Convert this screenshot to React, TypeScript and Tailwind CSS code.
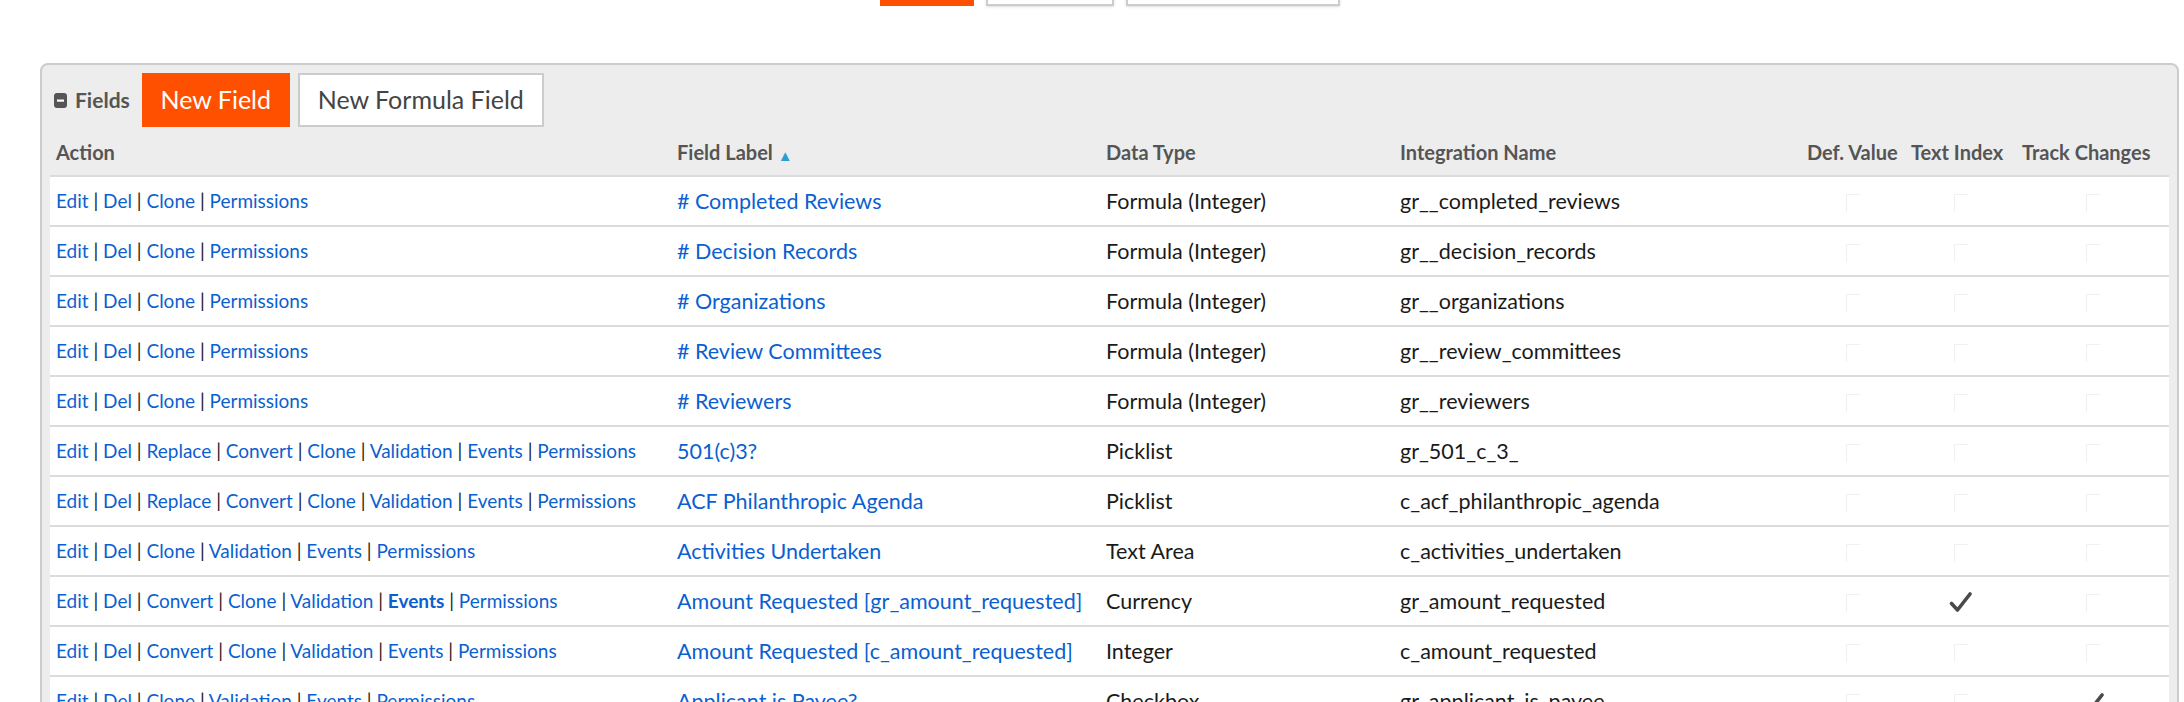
import React from "react";

type FieldRow = {
  actions: string[];
  boldAction?: string;
  label: string;
  dataType: string;
  integrationName: string;
  defValue?: boolean;
  textIndex?: boolean;
  trackChanges?: boolean;
};

const formulaActions = ["Edit", "Del", "Clone", "Permissions"];
const fullActions = ["Edit", "Del", "Replace", "Convert", "Clone", "Validation", "Events", "Permissions"];
const basicActions = ["Edit", "Del", "Clone", "Validation", "Events", "Permissions"];
const convertActions = ["Edit", "Del", "Convert", "Clone", "Validation", "Events", "Permissions"];

const rows: FieldRow[] = [
  { actions: formulaActions, label: "# Completed Reviews", dataType: "Formula (Integer)", integrationName: "gr__completed_reviews" },
  { actions: formulaActions, label: "# Decision Records", dataType: "Formula (Integer)", integrationName: "gr__decision_records" },
  { actions: formulaActions, label: "# Organizations", dataType: "Formula (Integer)", integrationName: "gr__organizations" },
  { actions: formulaActions, label: "# Review Committees", dataType: "Formula (Integer)", integrationName: "gr__review_committees" },
  { actions: formulaActions, label: "# Reviewers", dataType: "Formula (Integer)", integrationName: "gr__reviewers" },
  { actions: fullActions, label: "501(c)3?", dataType: "Picklist", integrationName: "gr_501_c_3_" },
  { actions: fullActions, label: "ACF Philanthropic Agenda", dataType: "Picklist", integrationName: "c_acf_philanthropic_agenda" },
  { actions: basicActions, label: "Activities Undertaken", dataType: "Text Area", integrationName: "c_activities_undertaken" },
  {
    actions: convertActions,
    boldAction: "Events",
    label: "Amount Requested [gr_amount_requested]",
    dataType: "Currency",
    integrationName: "gr_amount_requested",
    textIndex: true,
  },
  { actions: convertActions, label: "Amount Requested [c_amount_requested]", dataType: "Integer", integrationName: "c_amount_requested" },
  { actions: basicActions, label: "Applicant is Payee?", dataType: "Checkbox", integrationName: "gr_applicant_is_payee", trackChanges: true },
];

function Check({ on }: { on?: boolean }) {
  if (on) {
    return (
      <svg width="24" height="22" viewBox="0 0 24 22" className="inline-block align-middle">
        <path d="M2.5 12.5 L8.5 19 L21 3" fill="none" stroke="#4a4a4a" strokeWidth="3.6" strokeLinecap="round" strokeLinejoin="round" />
      </svg>
    );
  }
  // disabled checkbox, barely visible
  return <span className="inline-block w-[14px] h-[18px] border-l border-t border-[#f0f0f0] align-middle" />;
}

function ActionLinks({ actions, bold }: { actions: string[]; bold?: string }) {
  return (
    <span className="text-[19px] text-[#222]">
      {actions.map((a, i) => (
        <span key={a}>
          {i > 0 && " | "}
          <a href="#" className={`text-[#0b5fd0] ${a === bold ? "font-bold" : ""}`}>
            {a}
          </a>
        </span>
      ))}
    </span>
  );
}

export default function App() {
  return (
    <main className="min-h-screen bg-white font-['Lato','Liberation_Sans',sans-serif] overflow-hidden h-[702px]">
      {/* toolbar buttons above, mostly scrolled out of view */}
      <div className="flex gap-3 ml-[880px] mt-[-48px]">
        <button type="button" className="w-[94px] h-[54px] bg-[#ff5000]" />
        <button type="button" className="w-[128px] h-[54px] bg-white border-2 border-[#cccccc] shadow" />
        <button type="button" className="w-[214px] h-[54px] bg-white border-2 border-[#cccccc] shadow" />
      </div>

      <div className="ml-[40px] mr-[5px] mt-[57px] bg-[#ededed] border-2 border-[#cccccc] rounded-lg px-[8px] pt-[6px]">
        <div className="flex items-center h-[58px]">
          <svg width="13" height="15" viewBox="0 0 13 15" className="ml-[4px]">
            <rect x="0" y="0" width="13" height="15" rx="3" fill="#555" />
            <rect x="3" y="6.5" width="7" height="2.2" fill="#fff" />
          </svg>
          <span className="ml-[8px] text-[21px] font-bold text-[#555]">Fields</span>
          <button type="button" className="ml-[12px] h-[54px] w-[148px] bg-[#ff5000] text-white text-[25px]">
            New Field
          </button>
          <button
            type="button"
            className="ml-[8px] h-[54px] w-[246px] bg-white border-2 border-[#cccccc] text-[#444] text-[25px]"
          >
            New Formula Field
          </button>
        </div>

        <table className="w-full table-fixed border-collapse">
          <colgroup>
            <col className="w-[621px]" />
            <col className="w-[429px]" />
            <col className="w-[294px]" />
            <col className="w-[407px]" />
            <col className="w-[104px]" />
            <col className="w-[111px]" />
            <col />
          </colgroup>
          <thead>
            <tr className="h-[47px] text-[20px] font-bold text-[#555] text-left">
              <th className="pl-[6px] font-bold">Action</th>
              <th className="pl-[6px] font-bold">
                Field Label <span className="text-[#2a9fd6] text-[15px] align-middle">▲</span>
              </th>
              <th className="pl-[6px] font-bold">Data Type</th>
              <th className="pl-[6px] font-bold">Integration Name</th>
              <th className="pl-[6px] font-bold whitespace-nowrap">Def. Value</th>
              <th className="pl-[6px] font-bold whitespace-nowrap">Text Index</th>
              <th className="pl-[6px] font-bold whitespace-nowrap">Track Changes</th>
            </tr>
          </thead>
          <tbody>
            {rows.map((row) => (
              <tr key={row.label} className="h-[50px] bg-white border-t-2 border-[#dcdcdc]">
                <td className="pl-[6px] whitespace-nowrap">
                  <ActionLinks actions={row.actions} bold={row.boldAction} />
                </td>
                <td className="pl-[6px] whitespace-nowrap">
                  <a href="#" className="text-[21.5px] text-[#0b5fd0]">
                    {row.label}
                  </a>
                </td>
                <td className="pl-[6px] text-[21.5px] text-[#1a1a1a]">{row.dataType}</td>
                <td className="pl-[6px] text-[21.5px] text-[#1a1a1a]">{row.integrationName}</td>
                <td className="text-center">
                  <Check on={row.defValue} />
                </td>
                <td className="text-center">
                  <Check on={row.textIndex} />
                </td>
                <td className="text-center">
                  <Check on={row.trackChanges} />
                </td>
              </tr>
            ))}
          </tbody>
        </table>
      </div>
    </main>
  );
}
